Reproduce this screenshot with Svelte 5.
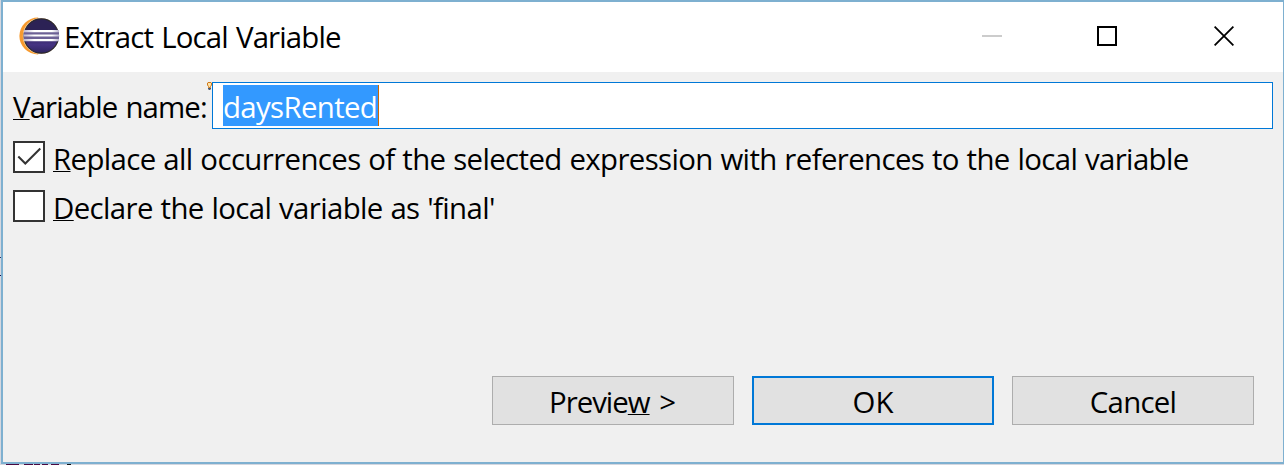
<script>
  let replaceAll = $state(true);
  let declareFinal = $state(false);
</script>

{#snippet box(on)}
  <svg width="32" height="32" viewBox="0 0 32 32">
    <rect x="1" y="1" width="30" height="30" fill="#fff" stroke="#333" stroke-width="2" />
    {#if on}
      <path d="M5.3 15.5 12.3 22.5 27.3 7.5" fill="none" stroke="#333" stroke-width="2" />
    {/if}
  </svg>
{/snippet}

<div class="desktop">
  <div class="dialog">
    <header>
      <svg class="logo" width="42" height="40" viewBox="0 0 42 40">
        <defs>
          <linearGradient id="orb" x1="0" y1="0" x2="0" y2="1">
            <stop offset="0" stop-color="#2c2255" />
            <stop offset=".4" stop-color="#2c2255" />
            <stop offset=".75" stop-color="#453382" />
            <stop offset="1" stop-color="#2f2460" />
          </linearGradient>
          <linearGradient id="stripe" x1="0" y1="0" x2="1" y2="0">
            <stop offset="0" stop-color="#b9b3cf" />
            <stop offset=".3" stop-color="#fff" />
            <stop offset=".8" stop-color="#fff" />
            <stop offset="1" stop-color="#b9b3cf" />
          </linearGradient>
        </defs>
        <path d="M20 1.6A18.6 18.4 0 0 0 20 38.4L22 36V4Z" fill="#f79a2e" />
        <circle cx="22.8" cy="20" r="18" fill="#fbd9ae" />
        <circle cx="23.3" cy="20" r="17.2" fill="url(#orb)" stroke="#2b2930" stroke-width="1.2" />
        <path d="M6 14.5H41V25H6Z" fill="#6c6095" />
        <path d="M6 14H41V16.3H6ZM5.5 18.5H41V20.6H5.5ZM6 23H41V25.3H6Z" fill="url(#stripe)" />
      </svg>
      <h1>Extract Local Variable</h1>
      <div class="controls">
        <svg width="20" height="20" viewBox="0 0 20 20"><path d="M0 9H20V11H0Z" fill="#ccc" /></svg>
        <svg width="20" height="20" viewBox="0 0 20 20"><rect x="1" y="1" width="18" height="18" fill="none" stroke="#000" stroke-width="2" /></svg>
        <svg width="20" height="20" viewBox="0 0 20 20"><path d="M.6.6 19.4 19.4M19.4.6.6 19.4" stroke="#000" stroke-width="1.8" /></svg>
      </div>
    </header>

    <main>
      <div class="field">
        <span class="name"><u>V</u>ariable name:</span>
        <div class="input"><span class="selected">daysRented</span></div>
        <svg class="bulb" width="5" height="8" viewBox="0 0 5 8">
          <path d="M1 .5H4L4.5 1V3L3.5 4.5V5.5H1.5V4.5L.5 3V1Z" fill="#ffe3a8" stroke="#cf7a1c" />
          <path d="M1 6H4V7H3.5V8H1.5V7H1Z" fill="#4d5a70" />
        </svg>
      </div>
      <div class="check" role="checkbox" tabindex="-1" aria-checked={replaceAll}>
        {@render box(replaceAll)}
        <span><u>R</u>eplace all occurrences of the selected expression with references to the local variable</span>
      </div>
      <div class="check" role="checkbox" tabindex="-1" aria-checked={declareFinal}>
        {@render box(declareFinal)}
        <span><u>D</u>eclare the local variable as 'final'</span>
      </div>
    </main>

    <footer>
      <button><span class="preview">Previe<u>w</u> &gt;</span></button>
      <button class="default"><span>OK</span></button>
      <button><span class="cancel">Cancel</span></button>
    </footer>
  </div>
</div>

<style>
  .desktop {
    box-sizing: border-box;
    width: 1284px;
    height: 465px;
    padding: 0 0 1px 1px;
    background:
      linear-gradient(#4a0840, #4a0840) 6px 464px / 13px 1px no-repeat,
      linear-gradient(#4a0840, #4a0840) 24px 464px / 9px 1px no-repeat,
      linear-gradient(#4a0840, #4a0840) 34px 464px / 6px 1px no-repeat,
      linear-gradient(#4a0840, #4a0840) 42px 464px / 6px 1px no-repeat,
      linear-gradient(#4a0840, #4a0840) 51px 464px / 8px 1px no-repeat,
      linear-gradient(#111, #111) 67px 464px / 4px 1px no-repeat,
      linear-gradient(#236, #236) 0 257px / 1px 1px no-repeat,
      linear-gradient(#115, #115) 0 275px / 1px 1px no-repeat,
      #d5d7df;
    font: 29.4px/40px "Open Sans", "Noto Sans", sans-serif;
    color: #000;
    overflow: hidden;
  }
  .dialog {
    box-sizing: border-box;
    height: 464px;
    border: 2px solid #7eb0d0;
    border-right-width: 1px;
    background: #f0f0f0;
    display: flex;
    flex-direction: column;
  }
  header {
    height: 70px;
    flex: none;
    background: #fff;
    display: flex;
    align-items: flex-start;
  }
  .logo {
    margin: 14px 0 0 15px;
  }
  h1 {
    margin: 15px 0 0 4px;
    font: inherit;
    letter-spacing: -0.86px;
    word-spacing: 1.4px;
    white-space: nowrap;
  }
  .controls {
    display: flex;
    gap: 95px;
    margin: 24px 49px 0 auto;
  }
  .controls svg:nth-child(2) {
    margin-right: 2px;
  }
  main {
    padding: 10px 10px 0 10px;
  }
  .field {
    position: relative;
    display: flex;
    align-items: center;
    height: 47px;
    margin-bottom: 12px;
  }
  .name {
    width: 199px;
    flex: none;
    margin-top: 3px;
    letter-spacing: -0.9px;
    word-spacing: 1.4px;
    white-space: nowrap;
  }
  .input {
    box-sizing: border-box;
    flex: 1;
    height: 47px;
    padding: 2px 10px;
    border: 1px solid #0078d7;
    background: #fff;
  }
  .selected {
    display: block;
    box-sizing: border-box;
    width: 156px;
    height: 41px;
    border-right: 1px solid #cc6700;
    line-height: 44px;
    letter-spacing: -0.65px;
    background: #39f;
    color: #fff;
    white-space: nowrap;
  }
  .bulb {
    position: absolute;
    left: 194px;
    top: 0;
  }
  .check {
    display: flex;
    height: 32px;
    margin-bottom: 17px;
    gap: 8px;
  }
  .check span {
    margin-top: -2px;
    letter-spacing: -0.62px;
    word-spacing: 0.7px;
    white-space: nowrap;
  }
  svg {
    display: block;
    flex: none;
  }
  u {
    text-decoration: underline 1px;
    text-underline-offset: 1px;
    text-decoration-skip-ink: none;
  }
  footer {
    display: flex;
    gap: 18px;
    justify-content: flex-end;
    margin: auto 29px 37px 0;
  }
  button {
    box-sizing: border-box;
    width: 242px;
    height: 49px;
    padding: 3px 0 0;
    border: 1px solid #adadad;
    background: #e1e1e1;
    color: #000;
    font: inherit;
  }
  .preview {
    margin-right: 2px;
    letter-spacing: -1px;
    word-spacing: 3px;
  }
  .cancel {
    letter-spacing: -0.75px;
  }
  .default {
    border: 2px solid #0078d7;
  }
</style>
